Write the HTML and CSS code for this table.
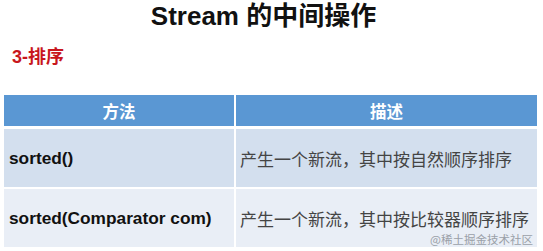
FILE: index.html
```html
<!DOCTYPE html>
<html lang="zh">
<head>
<meta charset="utf-8">
<link rel="stylesheet" href="styles.css">
</head>
<body>
<div class="page">
  <h1 class="title">Stream 的中间操作</h1>
  <div class="subtitle">3-排序</div>
  <div class="table">
    <div class="cell head">方法</div>
    <div class="cell head">描述</div>
    <div class="cell odd code">sorted()</div>
    <div class="cell odd desc">产生一个新流，其中按自然顺序排序</div>
    <div class="cell even code">sorted(Comparator com)</div>
    <div class="cell even desc">产生一个新流，其中按比较器顺序排序</div>
  </div>
  <div class="watermark">@稀土掘金技术社区</div>
</div>
</body>
</html>
```

FILE: styles.css
```css
html, body {
  margin: 0;
  padding: 0;
  background: #ffffff;
}
.page {
  position: relative;
  width: 543px;
  height: 251px;
  overflow: hidden;
  font-family: "Liberation Sans", "Noto Sans CJK SC", sans-serif;
}
.title {
  margin: 0;
  height: 32px;
  line-height: 32px;
  font-size: 26px;
  font-weight: bold;
  text-align: center;
  color: #111;
  padding-right: 16px;
}
.subtitle {
  margin: 15px 0 0 12px;
  height: 20px;
  line-height: 20px;
  font-size: 18px;
  font-weight: bold;
  color: #c8161d;
}
.table {
  margin: 28px 0 0 4px;
  width: 533px;
  display: grid;
  grid-template-columns: 230px 1fr;
  grid-template-rows: 32px 58px 58px;
  column-gap: 2px;
  row-gap: 2px;
}
.cell {
  display: flex;
  align-items: center;
}
.head {
  background: #5a97d3;
  color: #fff;
  justify-content: center;
  font-size: 16.5px;
  font-weight: bold;
  margin-bottom: 1px;
}
.odd { background: #d3dfee; }
.even { background: #e9eef6; }
.code {
  padding-left: 5px;
  font-size: 17.3px;
  font-weight: bold;
  color: #111;
}
.desc {
  padding-left: 4px;
  font-family: "Noto Sans CJK SC", sans-serif;
  font-size: 17px;
  color: #444;
}
.watermark {
  position: absolute;
  right: 10px;
  bottom: 5px;
  line-height: 14px;
  font-family: "Noto Sans CJK SC", sans-serif;
  font-size: 11.5px;
  color: #9aa0a8;
}
```
